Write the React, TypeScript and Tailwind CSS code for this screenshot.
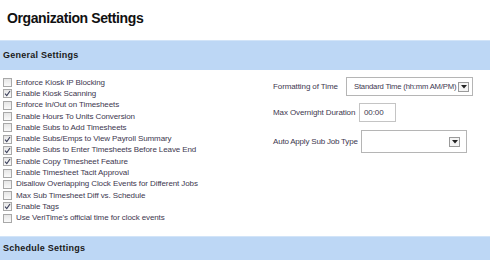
import React from "react";

const items: [string, boolean][] = [
  ["Enforce Kiosk IP Blocking", false],
  ["Enable Kiosk Scanning", true],
  ["Enforce In/Out on Timesheets", false],
  ["Enable Hours To Units Conversion", false],
  ["Enable Subs to Add Timesheets", false],
  ["Enable Subs/Emps to View Payroll Summary", true],
  ["Enable Subs to Enter Timesheets Before Leave End", true],
  ["Enable Copy Timesheet Feature", true],
  ["Enable Timesheet Tacit Approval", false],
  ["Disallow Overlapping Clock Events for Different Jobs", false],
  ["Max Sub Timesheet Diff vs. Schedule", false],
  ["Enable Tags", true],
  ["Use VeriTime's official time for clock events", false],
];

function Box({ checked }: { checked: boolean }) {
  return (
    <span className="w-[9px] h-[9px] border border-[#a8a8a8] bg-gradient-to-b from-[#e6e6e6] to-[#fafafa] flex items-center justify-center shrink-0">
      {checked && (
        <svg width="7" height="7" viewBox="0 0 7 7">
          <path d="M1 3.6 L2.8 5.6 L6 1" stroke="#3a3f5a" strokeWidth="1.1" fill="none" />
        </svg>
      )}
    </span>
  );
}

function Arrow() {
  return (
    <span className="w-[11px] h-[10px] border border-[#9a9a9a] bg-[#f4f4f4] flex items-center justify-center shrink-0">
      <svg width="6" height="4" viewBox="0 0 6 4">
        <path d="M0 0 L6 0 L3 3.5 Z" fill="#222" />
      </svg>
    </span>
  );
}

export default function App() {
  return (
    <div className="w-[490px] h-[260px] bg-white overflow-hidden text-[#40384f]" style={{ fontFamily: '"Liberation Sans", Arial, sans-serif' }}>
      <div className="h-[40px] pl-[7px] pt-[9px]">
        <h1 className="text-[14px] font-bold text-[#111] leading-[18px] tracking-[-0.4px]">Organization Settings</h1>
      </div>
      <div className="h-[30px] bg-[#bdd7f5] border-t border-[#d2e4f8] flex items-center pl-[3px]">
        <span className="text-[9px] font-bold text-[#1a1a1a] tracking-[0.25px]">General Settings</span>
      </div>
      <div className="flex h-[166px] text-[8px] tracking-[-0.1px]">
        <div className="w-[273px] shrink-0 pt-[7px] pl-[3px] flex flex-col">
          {items.map(([label, checked]) => (
            <div key={label} className="h-[11.3px] flex items-center gap-[4px] leading-none whitespace-nowrap">
              <Box checked={checked} />
              <span>{label}</span>
            </div>
          ))}
        </div>
        <div className="flex flex-col pt-[7px] whitespace-nowrap">
          <div className="flex items-center h-[19px]">
            <span className="w-[73px] shrink-0">Formatting of Time</span>
            <div className="w-[127px] h-[19px] border border-[#b5b5b5] flex items-center justify-between pl-[7px] pr-[3px]">
              <span className="text-[7.7px] tracking-[-0.2px]">Standard Time (hh:mm AM/PM)</span>
              <Arrow />
            </div>
          </div>
          <div className="flex items-center h-[19px] mt-[7px]">
            <span className="w-[86px] shrink-0">Max Overnight Duration</span>
            <div className="w-[37px] h-[19px] border border-[#c4c4c4] flex items-center pl-[4px]">00:00</div>
          </div>
          <div className="flex items-center h-[23px] mt-[8px]">
            <span className="w-[88px] shrink-0 tracking-[-0.2px]">Auto Apply Sub Job Type</span>
            <div className="w-[106px] h-[23px] border border-[#b5b5b5] flex items-center justify-end pr-[6px]">
              <Arrow />
            </div>
          </div>
        </div>
      </div>
      <div className="h-[24px] bg-[#bdd7f5] border-t border-[#d2e4f8] flex items-center pl-[3px]">
        <span className="text-[9px] font-bold text-[#1a1a1a] tracking-[0.25px]">Schedule Settings</span>
      </div>
    </div>
  );
}
